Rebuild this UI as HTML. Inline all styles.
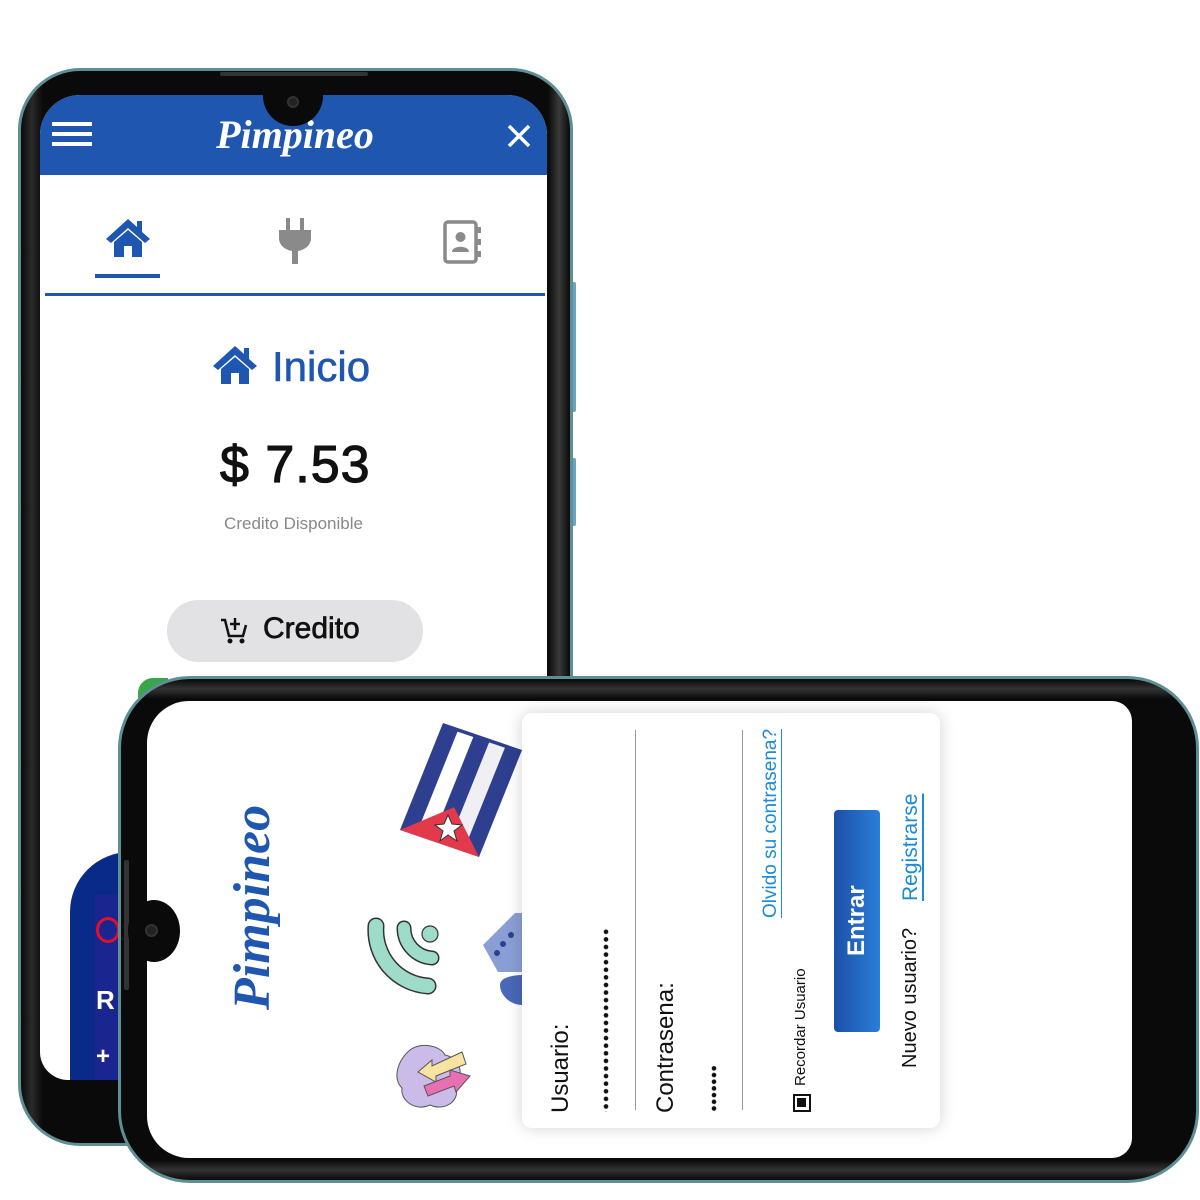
<!DOCTYPE html>
<html><head><meta charset="utf-8"><style>
*{margin:0;padding:0;box-sizing:border-box}
html,body{width:1200px;height:1200px;background:#fff;overflow:hidden;font-family:"Liberation Sans",sans-serif}
.abs{position:absolute}
.vt{position:absolute;writing-mode:vertical-rl;transform:rotate(180deg);white-space:nowrap}
</style></head><body>

<!-- TOP PHONE -->
<div class="abs" style="left:571px;top:282px;width:5px;height:130px;background:#6aa3bf;border-radius:2px"></div>
<div class="abs" style="left:571px;top:458px;width:5px;height:68px;background:#6aa3bf;border-radius:2px"></div>
<div class="abs" style="left:18px;top:68px;width:555px;height:1078px;border-radius:62px;background:#5d8f95;padding:3px">
  <div style="width:100%;height:100%;border-radius:59px;background:linear-gradient(90deg,#0a0a0a 0,#2a2a2a 2%,#0a0a0a 4%,#0a0a0a 96%,#3a3a3a 98%,#0a0a0a 100%)"></div>
</div>
<div class="abs" style="left:220px;top:72px;width:148px;height:4px;background:#333;border-radius:2px"></div>
<div class="abs" style="left:40px;top:95px;width:507px;height:985px;border-radius:40px 40px 0 28px;background:#fff;overflow:hidden">
  <div class="abs" style="left:0;top:0;width:507px;height:80px;background:#1f56b0"></div>
  <div class="abs" style="left:12px;top:27px;width:40px;height:4px;background:#fff"></div>
  <div class="abs" style="left:12px;top:37px;width:40px;height:4px;background:#fff"></div>
  <div class="abs" style="left:12px;top:47px;width:40px;height:4px;background:#fff"></div>
  <div class="abs" style="left:140px;top:16px;width:230px;text-align:center;color:#fff;font-family:'Liberation Serif',serif;font-style:italic;font-weight:bold;font-size:40px">Pimpineo</div>
  <svg class="abs" style="left:466px;top:28px" width="26" height="26"><path d="M3 3L23 23M23 3L3 23" stroke="#fff" stroke-width="3.5"/></svg>
  <svg class="abs" style="left:64px;top:122px" width="48" height="42" viewBox="0 0 48 42"><path d="M24 2L2 22L7 26L24 11L41 26L46 22L38 15V4H33V10Z" fill="#1f56b0"/><path d="M10 25L24 13L38 25V40H28V29H20V40H10Z" fill="#1f56b0"/></svg>
  <div class="abs" style="left:55px;top:179px;width:65px;height:4px;background:#1f56b0"></div>
  <svg class="abs" style="left:238px;top:123px" width="34" height="46" viewBox="0 0 34 46"><rect x="8" y="0" width="4" height="12" fill="#8a8a8a"/><rect x="22" y="0" width="4" height="12" fill="#8a8a8a"/><path d="M1 12H33V20C33 28 26 32 20 33V46H14V33C8 32 1 28 1 20Z" fill="#8a8a8a"/></svg>
  <svg class="abs" style="left:403px;top:125px" width="40" height="44" viewBox="0 0 40 44"><rect x="2" y="2" width="31" height="40" rx="3" fill="none" stroke="#8a8a8a" stroke-width="3.5"/><rect x="33" y="7" width="5" height="6" fill="#8a8a8a"/><rect x="33" y="19" width="5" height="6" fill="#8a8a8a"/><rect x="33" y="31" width="5" height="6" fill="#8a8a8a"/><circle cx="17.5" cy="17" r="5" fill="#8a8a8a"/><path d="M9 32C9 25 26 25 26 32Z" fill="#8a8a8a"/></svg>
  <div class="abs" style="left:5px;top:198px;width:500px;height:3px;background:#1f56b0"></div>
  <svg class="abs" style="left:170px;top:249px" width="50" height="42" viewBox="0 0 48 42"><path d="M24 2L2 22L7 26L24 11L41 26L46 22L38 15V4H33V10Z" fill="#1f56b0"/><path d="M10 25L24 13L38 25V40H28V29H20V40H10Z" fill="#1f56b0"/></svg>
  <div class="abs" style="left:232px;top:248px;color:#1f56b0;font-size:42px;-webkit-text-stroke:0.6px #1f56b0">Inicio</div>
  <div class="abs" style="left:180px;top:340px;color:#111;font-size:52px;-webkit-text-stroke:1.2px #111;letter-spacing:1px">$ 7.53</div>
  <div class="abs" style="left:0;top:419px;width:507px;text-align:center;color:#888;font-size:17px">Credito Disponible</div>
  <div class="abs" style="left:127px;top:505px;width:256px;height:62px;border-radius:31px;background:#e2e2e4"></div>
  <svg class="abs" style="left:180px;top:520px" width="28" height="30" viewBox="0 0 28 30"><path d="M1 5H5L9 21H23L26 10" fill="none" stroke="#111" stroke-width="2.5"/><path d="M15 3V15M10 9H20" stroke="#111" stroke-width="2.5"/><circle cx="10" cy="26" r="2.5" fill="#111"/><circle cx="22" cy="26" r="2.5" fill="#111"/></svg>
  <div class="abs" style="left:223px;top:517px;color:#111;font-size:30px;-webkit-text-stroke:0.7px #111">Credito</div>
  <div class="abs" style="left:30px;top:757px;width:120px;height:240px;border-radius:60px 60px 0 0;background:#0a2a8a"></div>
  <div class="abs" style="left:55px;top:800px;width:60px;height:200px;background:#1a2590"></div>
  <div class="abs" style="left:56px;top:822px;width:24px;height:26px;border:3px solid #e0102a;border-radius:50%"></div>
  <div class="abs" style="left:56px;top:890px;color:#fff;font-size:26px;font-weight:bold">R</div>
  <div class="abs" style="left:56px;top:948px;color:#fff;font-size:24px;font-weight:bold">+</div>
</div>
<div class="abs" style="left:263px;top:90px;width:60px;height:36px;border-radius:0 0 30px 30px;background:#0a0a0a"></div>
<div class="abs" style="left:287px;top:96px;width:12px;height:12px;border-radius:50%;background:#222;border:2px solid #333"></div>

<!-- LANDSCAPE PHONE -->
<div class="abs" style="left:138px;top:678px;width:30px;height:30px;border-radius:15px 0 0 0;background:#3aa64a"></div>
<div class="abs" style="left:118px;top:676px;width:1081px;height:507px;border-radius:72px;background:#5d8f95;padding:3px">
  <div style="width:100%;height:100%;border-radius:69px;background:linear-gradient(180deg,#0a0a0a 0,#333 2%,#0a0a0a 4%,#0a0a0a 96%,#333 98%,#0a0a0a 100%)"></div>
</div>
<div class="abs" style="left:124px;top:860px;width:5px;height:130px;background:#333;border-radius:2px"></div>
<div class="abs" style="left:147px;top:701px;width:985px;height:457px;border-radius:42px 20px 20px 42px;background:#fff;overflow:hidden"></div>
<div class="abs" style="left:128px;top:900px;width:52px;height:62px;border-radius:50%;background:#0a0a0a"></div>
<div class="abs" style="left:145px;top:924px;width:13px;height:13px;border-radius:50%;background:#222;border:2px solid #333"></div>

<div class="vt" style="left:218px;top:830px;height:180px;color:#1f56b0;font-family:'Liberation Serif',serif;font-style:italic;font-weight:bold;font-size:52px;line-height:70px;text-align:center">Pimpineo</div>

<svg class="abs" style="left:0;top:0" width="1200" height="1200">
  <g transform="matrix(79,27,-43,107,443,723)">
    <rect x="0" y="0" width="1" height="1" fill="#2e3f8f"/>
    <rect x="0.2" y="0.03" width="0.2" height="0.94" fill="#fff"/>
    <rect x="0.6" y="0.03" width="0.2" height="0.94" fill="#f0f0f4"/>
    <polygon points="0,1 1,1 0.5,0.66" fill="#e23a4a"/>
  </g>
  <polygon points="448,815 452,824 462,825 454,831 457,841 448,835 440,841 443,831 435,825 444,824" fill="#fff" stroke="#333" stroke-width="1"/>
  <path d="M376 926A56 56 0 0 0 428 986" fill="none" stroke="#333" stroke-width="17" stroke-linecap="round"/>
  <path d="M376 926A56 56 0 0 0 428 986" fill="none" stroke="#9edbc9" stroke-width="14" stroke-linecap="round"/>
  <path d="M404 928A30 30 0 0 0 432 958" fill="none" stroke="#333" stroke-width="15" stroke-linecap="round"/>
  <path d="M404 928A30 30 0 0 0 432 958" fill="none" stroke="#9edbc9" stroke-width="12" stroke-linecap="round"/>
  <circle cx="430" cy="934" r="8" fill="#9edbc9" stroke="#333" stroke-width="1.2"/>
  <path d="M483 945L515 913L522 913L522 972L498 972Z" fill="#8a9ed6"/>
  <circle cx="503" cy="944" r="3" fill="#2e3f8f"/><circle cx="511" cy="935" r="3" fill="#2e3f8f"/><circle cx="497" cy="953" r="3" fill="#2e3f8f"/>
  <path d="M500 985C500 975 522 975 522 975V1005C510 1005 500 995 500 985Z" fill="#4a68b8"/>
  <path d="M410 1050C420 1042 440 1045 445 1055C460 1058 465 1075 455 1085C462 1100 445 1112 430 1105C415 1112 400 1100 402 1088C392 1078 398 1060 410 1050Z" fill="#cbbbe8" stroke="#555" stroke-width="1"/>
  <polygon points="418,1072 432,1060 432,1066 462,1052 466,1064 436,1076 436,1082" fill="#f7e4a0" stroke="#555" stroke-width="1"/>
  <polygon points="424,1086 450,1076 450,1070 470,1076 456,1092 454,1086 428,1096" fill="#e870b0" stroke="#555" stroke-width="1"/>
</svg>

<div class="abs" style="left:522px;top:713px;width:418px;height:415px;border-radius:10px;background:#fff;box-shadow:0 0 16px rgba(0,0,0,0.18)"></div>
<div class="vt" style="left:546px;top:730px;height:383px;font-size:24px;line-height:30px;color:#111">Usuario:</div>
<div class="abs" style="left:602px;top:928px;width:8px;height:184px;background:radial-gradient(circle,#111 2px,transparent 2.6px);background-size:8px 7.6px"></div>
<div class="abs" style="left:635px;top:730px;width:1px;height:380px;background:#999"></div>
<div class="vt" style="left:651px;top:730px;height:383px;font-size:24px;line-height:30px;color:#111">Contrasena:</div>
<div class="abs" style="left:710px;top:1065px;width:8px;height:47px;background:radial-gradient(circle,#111 2px,transparent 2.6px);background-size:8px 6.7px"></div>
<div class="abs" style="left:742px;top:730px;width:1px;height:380px;background:#999"></div>
<div class="vt" style="left:759px;top:729px;height:189px;font-size:19px;line-height:24px;color:#1c8ad8;text-decoration:underline">Olvido su contrasena?</div>
<div class="abs" style="left:793px;top:1094px;width:18px;height:18px;border:2.5px solid #111;background:#fff"><div style="margin:2px;width:9px;height:9px;background:#111"></div></div>
<div class="vt" style="left:792px;top:900px;height:186px;font-size:15px;line-height:18px;color:#111">Recordar Usuario</div>
<div class="abs" style="left:834px;top:810px;width:46px;height:222px;border-radius:4px;background:linear-gradient(90deg,#1c4fa8,#2a7fd8)"></div>
<div class="vt" style="left:834px;top:810px;width:46px;height:222px;font-size:24px;line-height:46px;color:#fff;text-align:center;font-weight:bold">Entrar</div>
<div class="vt" style="left:898px;top:900px;height:168px;font-size:20px;line-height:25px;color:#111">Nuevo usuario?</div>
<div class="vt" style="left:898px;top:780px;height:121px;font-size:21px;line-height:25px;color:#1c8ad8;text-decoration:underline">Registrarse</div>

</body></html>
